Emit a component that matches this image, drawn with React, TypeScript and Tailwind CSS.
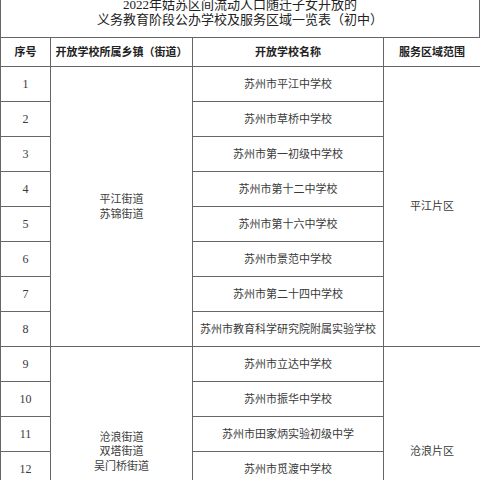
const font = { fontFamily: '"Liberation Serif", "Noto Sans CJK SC", serif' }

const rows = [
  '苏州市平江中学校',
  '苏州市草桥中学校',
  '苏州市第一初级中学校',
  '苏州市第十二中学校',
  '苏州市第十六中学校',
  '苏州市景范中学校',
  '苏州市第二十四中学校',
  '苏州市教育科学研究院附属实验学校',
  '苏州市立达中学校',
  '苏州市振华中学校',
  '苏州市田家炳实验初级中学',
  '苏州市觅渡中学校',
  '苏州市第五中学校',
  '苏州市第二十六中学校',
]

const groups: Record<number, { streets: string[]; area: string; span: number }> = {
  0: { streets: ['平江街道', '苏锦街道'], area: '平江片区', span: 8 },
  8: { streets: ['沧浪街道', '双塔街道', '吴门桥街道'], area: '沧浪片区', span: 6 },
}

export default function App() {
  const cell = 'border border-[#666] text-center align-middle'
  return (
    <div className="w-[480px] bg-white text-[#3a3a3a]" style={font}>
      {/* Title */}
      <div className="h-[37px] overflow-hidden border-x border-[#666] flex flex-col justify-end items-center pb-[10px] text-[13px] leading-[15px] text-[#222]">
        <p>2022年姑苏区间流动人口随迁子女开放的</p>
        <p>义务教育阶段公办学校及服务区域一览表（初中）</p>
      </div>

      <table className="w-[480px] table-fixed border-collapse text-[11px]">
        <colgroup>
          <col className="w-[50px]" />
          <col className="w-[142px]" />
          <col className="w-[191px]" />
          <col className="w-[97px]" />
        </colgroup>
        <thead>
          <tr className="h-[29px] font-bold text-[#222]">
            <th className={cell}>序号</th>
            <th className={cell + ' whitespace-nowrap'}>开放学校所属乡镇（街道）</th>
            <th className={cell}>开放学校名称</th>
            <th className={cell}>服务区域范围</th>
          </tr>
        </thead>
        <tbody>
          {rows.map((name, i) => {
            const g = groups[i]
            return (
              <tr key={i} className="h-[35px]">
                <td className={cell + ' text-[12px]'}>{i + 1}</td>
                {g && (
                  <td rowSpan={g.span} className={cell + ' leading-[14.5px]'}>
                    {g.streets.map(s => <p key={s}>{s}</p>)}
                  </td>
                )}
                <td className={cell + ' whitespace-nowrap'}>{name}</td>
                {g && <td rowSpan={g.span} className={cell}>{g.area}</td>}
              </tr>
            )
          })}
        </tbody>
      </table>
    </div>
  )
}
